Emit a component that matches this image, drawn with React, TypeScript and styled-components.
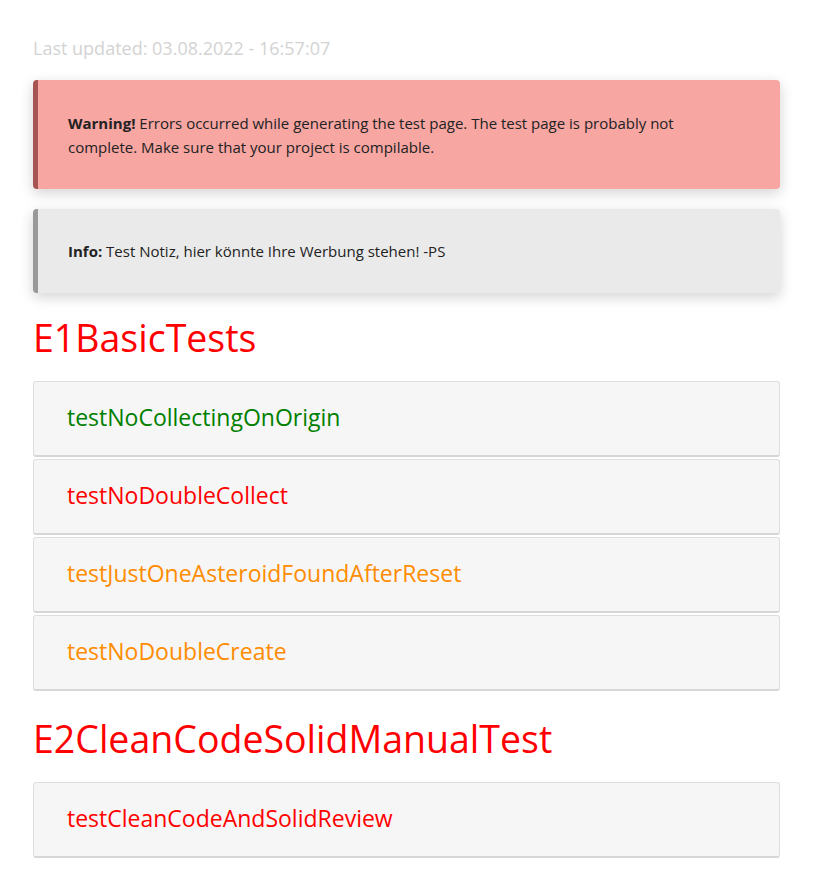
import styled, { createGlobalStyle } from "styled-components";

const GlobalStyle = createGlobalStyle`
  body {
    margin: 0;
    background: #fff;
    font-family: "Open Sans", "Noto Sans", sans-serif;
  }
`;

const Page = styled.div`
  padding: 33px 33px 20px;
`;

const Updated = styled.div`
  color: #d3d3d3;
  font-size: 18px;
  line-height: 30px;
  margin-bottom: 17px;
`;

const Note = styled.div<{ kind: "warning" | "info" }>`
  background: ${({ kind }) => (kind === "warning" ? "#f7a6a2" : "#eaeaea")};
  border-left: 5px solid ${({ kind }) => (kind === "warning" ? "#a65552" : "#999")};
  border-radius: 4px;
  box-shadow: 0 4px 14px rgba(0, 0, 0, 0.18);
  padding: ${({ kind }) => (kind === "warning" ? "31px 60px 30px 30px" : "30px")};
  margin-bottom: 20px;
  color: #222;
  font-size: 15px;
  line-height: 24px;

  b {
    font-weight: 700;
  }
`;

const Heading = styled.h2`
  color: #f00;
  font-weight: 400;
  font-size: 37.5px;
  line-height: 44px;
  margin: 23px 0 21px;
`;

const List = styled.div`
  display: flex;
  flex-direction: column;
  gap: 2px;
  margin-bottom: 26px;
`;

const TestCard = styled.div<{ status: "ok" | "fail" | "warn" }>`
  background: #f6f6f6;
  border: 1px solid #dedede;
  border-bottom: 2px solid #d6d6d6;
  border-radius: 3px;
  height: 69px;
  display: flex;
  align-items: center;
  padding: 0 33px 4px;
  font-size: 23px;
  font-weight: 400;
  color: ${({ status }) =>
    status === "ok" ? "#007f00" : status === "fail" ? "#f00" : "#ff8c00"};
`;

type Status = "ok" | "fail" | "warn";

const groups: { name: string; tests: { name: string; status: Status }[] }[] = [
  {
    name: "E1BasicTests",
    tests: [
      { name: "testNoCollectingOnOrigin", status: "ok" },
      { name: "testNoDoubleCollect", status: "fail" },
      { name: "testJustOneAsteroidFoundAfterReset", status: "warn" },
      { name: "testNoDoubleCreate", status: "warn" },
    ],
  },
  {
    name: "E2CleanCodeSolidManualTest",
    tests: [{ name: "testCleanCodeAndSolidReview", status: "fail" }],
  },
];

export default function App() {
  return (
    <>
      <GlobalStyle />
      <Page>
        <Updated>Last updated: 03.08.2022 - 16:57:07</Updated>
        <Note kind="warning">
          <b>Warning!</b> Errors occurred while generating the test page. The test page is
          probably not complete. Make sure that your project is compilable.
        </Note>
        <Note kind="info">
          <b>Info:</b> Test Notiz, hier könnte Ihre Werbung stehen! -PS
        </Note>
        {groups.map((g) => (
          <div key={g.name}>
            <Heading>{g.name}</Heading>
            <List>
              {g.tests.map((t) => (
                <TestCard key={t.name} status={t.status}>
                  {t.name}
                </TestCard>
              ))}
            </List>
          </div>
        ))}
      </Page>
    </>
  );
}
